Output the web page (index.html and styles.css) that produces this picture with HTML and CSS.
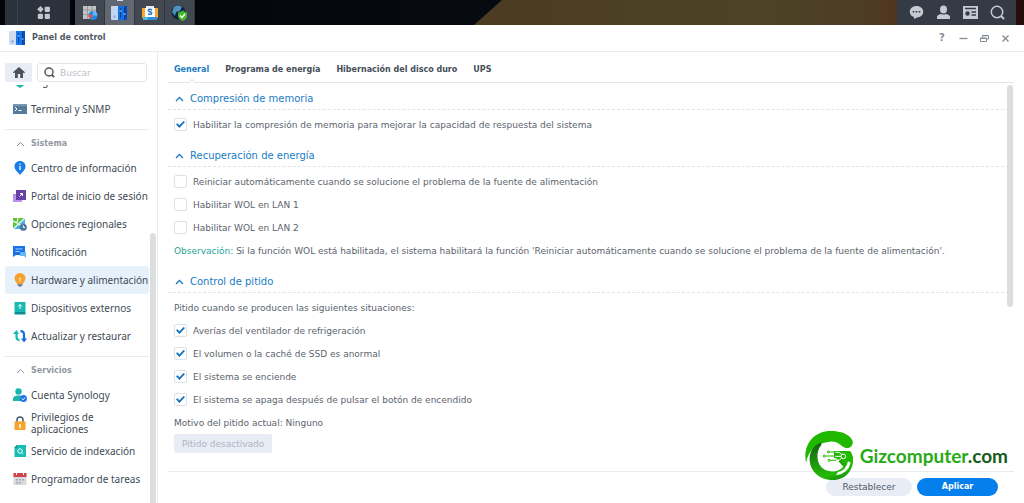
FILE: index.html
```html
<!DOCTYPE html>
<html lang="es">
  <head>
    <meta charset="utf-8">
    <title>Panel de control</title>
    <link rel="stylesheet" href="styles.css">
  </head>
  <body>
    <header class="taskbar">
      <svg class="wallpaper" viewBox="0 0 1024 25" preserveAspectRatio="none" aria-hidden="true">
        <defs>
          <linearGradient id="sand"><stop offset="0" stop-color="#4b3c22"/><stop offset=".5" stop-color="#4d4226"/><stop offset=".7" stop-color="#4c3e25"/><stop offset=".8" stop-color="#54301b"/><stop offset="1" stop-color="#250b08"/></linearGradient>
          <linearGradient id="night"><stop offset="0" stop-color="#02040a"/><stop offset="1" stop-color="#0c1017"/></linearGradient>
        </defs>
        <rect width="1024" height="25" fill="url(#night)"/>
        <path d="M502 0H1024V25H474z" fill="url(#sand)"/>
      </svg>
      <button class="task edge" aria-label="Mostrar escritorio"></button>
      <button class="task menu" aria-label="Menú principal">
        <svg width="14" height="14" viewBox="0 0 14 14" fill="#c3c8cf"><path d="M3.500 0L6.700 3.300 3.500 6.600.2 3.300z"/><rect x="7.700" y=".8" width="5.200" height="5.200" rx="1"/><rect x=".8" y="7.700" width="5.200" height="5.200" rx="1"/><rect x="7.700" y="7.700" width="5.200" height="5.200" rx="1"/></svg>
      </button>
      <button class="task app" aria-label="Monitor de recursos">
        <svg width="16" height="16" viewBox="0 0 16 16"><path d="M1 1h13v13H1z" fill="#c4c5c7"/><path d="M1 5h13M1 9.500h13M5.500 1v13M10 1v13" stroke="#8d9095" stroke-width=".8"/><circle cx="11" cy="10.500" r="4.500" fill="#2588ef"/><path d="M11 10.500V6a4.500 4.500 0 0 1 4.500 4.500z" fill="#65b5ff"/><path d="M11 10.500L6.800 9a4.500 4.500 0 0 0 1.500 5z" fill="#ef5149"/></svg>
      </button>
      <button class="task app active" aria-label="Panel de control">
        <svg width="17" height="16" viewBox="0 0 17 16"><path d="M1 1h6v14H1q-1 0-1-1V2q0-1 1-1z" fill="#c4d5ee"/><path d="M7 1h9v14H7z" fill="#1670dc"/><path d="M13 1h3v14h-3z" fill="#0a49bd"/><path d="M9.500 3v10M13.500 3v10" stroke="#082e72" stroke-width=".8"/><path d="M8.500 6h2M12.500 9h2" stroke="#65bdff" stroke-width="1.500"/><circle cx="3.500" cy="11.500" r="1.300" fill="#8bafe5"/></svg>
      </button>
      <button class="task app" aria-label="Centro de paquetes">
        <svg width="16" height="16" viewBox="0 0 16 16"><path d="M4 4V1h8v3" fill="#e9eef3"/><path d="M0 3h4v3h8V3h4v10H0z" fill="#f3a82b"/><path d="M3 3h10v9H3z" fill="#f7f9fc"/><path d="M1 12h14v3H1z" fill="#2790df"/><path d="M10 5Q8 3.800 6.800 4.500 5.500 6 8 6.700 10.500 7.500 9.300 9 8 9.800 6 8.800" fill="none" stroke="#2879d1" stroke-width="1.500"/><path d="M1 12h5v3H1z" fill="#4dbbd1"/></svg>
      </button>
      <button class="task app" aria-label="Asesor de seguridad">
        <svg width="17" height="16" viewBox="0 0 17 16"><circle cx="7.500" cy="7.500" r="7" fill="#0b263e"/><path d="M3 2q4-3 8 0L9 6 5 7 4 11 1 7z" fill="#4d91bc"/><path d="M8 8l5-3 1 4-4 3z" fill="#2d719b"/><path d="M11.500 6l4.500 1.500V11q0 3-4.500 5Q7 14 7 11V7.500z" fill="#43b82b"/><path d="M9 10.500l2 2 3-3.500" fill="none" stroke="#fff" stroke-width="1.500"/></svg>
      </button>
      <div class="tray">
        <button aria-label="Notificaciones"><svg width="15" height="15" viewBox="0 0 15 15"><path d="M7.500 1c4 0 6.700 2.500 6.700 5.800S11.500 12.300 8 12.400L5 14v-2C2.500 11.400.8 9.500.8 6.800.8 3.500 3.500 1 7.500 1z" fill="#c5cad3"/><path d="M3.700 6h1.600v1.600H3.700zM6.700 6h1.600v1.600H6.700zM9.700 6h1.600v1.600H9.700z" fill="#343b45"/></svg></button>
        <button aria-label="Usuario"><svg width="15" height="15" viewBox="0 0 15 15" fill="#c5cad3"><ellipse cx="7.500" cy="4.500" rx="3.500" ry="4"/><path d="M1 14v-2q0-2 4-3 2.500 1 5 0 4 1 4 3v2z"/></svg></button>
        <button aria-label="Widgets"><svg width="15" height="15" viewBox="0 0 15 15"><path d="M0 1h15v13H0z" fill="#c5cad3"/><path d="M2 3.500h11M8.500 7H13M8.500 10H13" stroke="#343b45" stroke-width="1.500"/><circle cx="4.500" cy="8.500" r="2.200" fill="#343b45"/></svg></button>
        <button aria-label="Buscar"><svg width="15" height="15" viewBox="0 0 15 15" fill="none" stroke="#c5cad3"><circle cx="7" cy="7" r="5.700" stroke-width="1.500"/><path d="M11 11l3 3" stroke-width="2"/></svg></button>
      </div>
    </header>

    <div class="window">
      <div class="titlebar">
        <svg width="17" height="16" viewBox="0 0 17 16"><path d="M1 1h6v14H1q-1 0-1-1V2q0-1 1-1z" fill="#cfdcf1"/><path d="M7 1h9v14H7z" fill="#1778e4"/><path d="M13 1h3v14h-3z" fill="#0a4fc4"/><path d="M9.500 3v10M13.500 3v10" stroke="#0a3586" stroke-width=".8"/><path d="M8.500 6h2M12.500 9h2" stroke="#53b1ff" stroke-width="1.500"/><circle cx="3.500" cy="11.500" r="1.300" fill="#86aae5"/></svg>
        <h1>Panel de control</h1>
        <div class="controls">
          <button class="help">?</button>
          <button aria-label="Minimizar"><svg width="9" height="9" viewBox="0 0 9 9"><path d="M.5 4.500h8" stroke="#858c96" stroke-width="1.300"/></svg></button>
          <button aria-label="Restaurar"><svg width="9" height="9" viewBox="0 0 9 9" fill="none" stroke="#858c96"><path d="M2.500 3.500V1.500h6v3.500H6.500M2.500 1.800h6"/><path d="M.5 4h6v3.500h-6zM.5 4.500h6"/></svg></button>
          <button aria-label="Cerrar"><svg width="9" height="9" viewBox="0 0 9 9"><path d="M1.500 1.500l6 6M7.500 1.500l-6 6" stroke="#858c96" stroke-width="1.400"/></svg></button>
        </div>
      </div>

      <div class="columns">
        <nav class="sidebar">
          <div class="tools">
            <button class="home" aria-label="Inicio"><svg width="12" height="11" viewBox="0 0 12 11"><path d="M6 0l6 5.300-.8 1-1.200-.9V11H7.200V7H4.800v4H2V5.400l-1.200.9-.8-1z" fill="#49525d"/></svg></button>
            <label class="search">
              <svg width="11" height="11" viewBox="0 0 11 11" fill="none" stroke="#49525d"><circle cx="5" cy="5" r="4" stroke-width="1.400"/><path d="M7.700 7.700l2.500 2.500" stroke-width="1.800"/></svg>
              <input type="text" placeholder="Buscar" aria-label="Buscar">
            </label>
          </div>
          <div class="list">
            <div class="items">
              <a href="#"><svg width="14" height="14" viewBox="0 0 14 14"><path d="M1 1l6-1 6 1v6q0 4-6 7Q1 11 1 7z" fill="#22b8ad"/></svg>Seguridad</a>
              <a href="#"><svg width="14" height="14" viewBox="0 0 14 14"><path d="M0 2h14v10H0z" fill="#587b9b"/><path d="M0 2h14v2H0z" fill="#7898b3"/><path d="M2 5l2 2-2 2M5.500 8.500h3" fill="none" stroke="#fff"/></svg>Terminal y SNMP</a>
              <h2><svg width="9" height="6" viewBox="0 0 9 6"><path d="M1 5l3.500-3.500L8 5" fill="none" stroke="#8d949d"/></svg>Sistema</h2>
              <a href="#"><svg width="14" height="14" viewBox="0 0 14 14"><path d="M7 0c3.200 0 5.500 2.300 5.500 5.500C12.500 9 9.500 10.500 7 14 4.500 10.500 1.500 9 1.500 5.500 1.500 2.300 3.800 0 7 0z" fill="#177ee9"/><path d="M7 2.500v1.300M7 5v4" stroke="#fff" stroke-width="1.300"/></svg>Centro de información</a>
              <a href="#"><svg width="14" height="14" viewBox="0 0 14 14"><path d="M0 5h9v8H0z" fill="#b990ee"/><path d="M3 1h10v10H3z" fill="#6741a5"/><path d="M6.500 7.500l3-3M7 4.500h2.500V7" stroke="#fff" fill="none"/></svg>Portal de inicio de sesión</a>
              <a href="#"><svg width="14" height="14" viewBox="0 0 14 14"><path d="M0 1h12v11H0z" fill="#5cc33a"/><path d="M12 1v11H0z" fill="#4aafe3"/><path d="M0 4l4 2 1-5M12 1L0 12M6 7l5 4" fill="none" stroke="#eefaf1" stroke-width="1.200"/><circle cx="10.300" cy="10.300" r="3.500" fill="#47769f"/><path d="M10.300 8.300v2.200H12" stroke="#fff" fill="none"/></svg>Opciones regionales</a>
              <a href="#"><svg width="14" height="14" viewBox="0 0 14 14"><path d="M0 1h12v9H3l-3 2z" fill="#1873e8"/><path d="M7 7h6v6l-2-2H7z" fill="#68b6fa"/><path d="M2.500 4h7M2.500 6.500h4" stroke="#9ed1ff"/></svg>Notificación</a>
              <a href="#" class="selected"><svg width="14" height="14" viewBox="0 0 14 14"><path d="M7 0a5.500 5.500 0 0 1 5.500 5.500c0 2.500-2 3.300-2.500 5.500H4C3.500 8.800 1.500 8 1.500 5.500A5.500 5.500 0 0 1 7 0z" fill="#f4a12f"/><path d="M4.500 11h5v1.500L7 14l-2.500-1.500z" fill="#7a858f"/><path d="M6 5h1v4" fill="none" stroke="#fff0bb"/></svg>Hardware y alimentación</a>
              <a href="#"><svg width="14" height="14" viewBox="0 0 14 14"><path d="M1.500 1h11v10h-11z" fill="#16bab2"/><path d="M1.500 11h11v2.500h-11z" fill="#078e8d"/><path d="M7 8V3.500M5 5.500l2-2 2 2" fill="none" stroke="#fff"/></svg>Dispositivos externos</a>
              <a href="#"><svg width="14" height="14" viewBox="0 0 14 14" fill="none" stroke-width="2.200"><path d="M3.500 3v5q0 3 3 3" stroke="#16b9b0"/><path d="M0 5l3.500-4L6 5z" fill="#16b9b0"/><path d="M7.500 2.200q4 0 3.500 4v5" stroke="#196be0"/><path d="M8 9.500l3 4 3-4z" fill="#196be0"/></svg>Actualizar y restaurar</a>
              <h2><svg width="9" height="6" viewBox="0 0 9 6"><path d="M1 5l3.500-3.500L8 5" fill="none" stroke="#8d949d"/></svg>Servicios</h2>
              <a href="#"><svg width="14" height="14" viewBox="0 0 14 14"><circle cx="5.500" cy="3.500" r="3.200" fill="#18b7ab"/><path d="M0 13v-3q1-2.500 4-2.500h3q3 0 4 2.500v3z" fill="#18b7ab"/><circle cx="10.500" cy="10.500" r="3.500" fill="#2374e8"/><path d="M8.800 10.500l1.300 1.300 2-2.300" fill="none" stroke="#fff"/></svg>Cuenta Synology</a>
              <a href="#"><svg width="14" height="14" viewBox="0 0 14 14"><path d="M4 7V4q0-3 3-3t3 3v3" fill="none" stroke="#4b596a" stroke-width="1.500"/><path d="M1.500 5.500h11V14h-11z" fill="#f7a52a"/><path d="M7 8v4" stroke="#fff" stroke-width="1.500"/></svg>Privilegios de aplicaciones</a>
              <a href="#"><svg width="14" height="14" viewBox="0 0 14 14"><path d="M4 1h9v12H1.500V3.500z" fill="#18bcb2"/><path d="M1.500 3.500L4 1v2.500z" fill="#087f84"/><circle cx="7" cy="7" r="2.200" fill="none" stroke="#fff"/><path d="M8.500 8.500l1.700 1.300" stroke="#fff"/></svg>Servicio de indexación</a>
              <a href="#"><svg width="14" height="14" viewBox="0 0 14 14"><path d="M.5 2h13v11H.5z" fill="#d7d9dd"/><path d="M.5 1h13v4H.5z" fill="#cf4545"/><path d="M3.500 0v3M10.500 0v3" stroke="#fff"/><path d="M3 7h2v1.500H3zM6 7h2v1.500H6zM9 7h2v1.500H9zM3 10h2v1.500H3zM6 10h2v1.500H6z" fill="#a5a9b0"/></svg>Programador de tareas</a>
            </div>
            <span class="thumb"></span>
          </div>
        </nav>

        <main>
          <div class="tabs">
            <a href="#" class="current">General</a>
            <a href="#">Programa de energía</a>
            <a href="#">Hibernación del disco duro</a>
            <a href="#">UPS</a>
          </div>
          <form class="settings">
            <section>
              <h3><svg width="9" height="6" viewBox="0 0 9 6"><path d="M1 5l3.500-3.500L8 5" fill="none" stroke="#1a7cc4" stroke-width="1.300"/></svg>Compresión de memoria</h3>
              <label class="row"><input type="checkbox" checked>Habilitar la compresión de memoria para mejorar la capacidad de respuesta del sistema</label>
            </section>
            <section>
              <h3><svg width="9" height="6" viewBox="0 0 9 6"><path d="M1 5l3.500-3.500L8 5" fill="none" stroke="#1a7cc4" stroke-width="1.300"/></svg>Recuperación de energía</h3>
              <label class="row"><input type="checkbox">Reiniciar automáticamente cuando se solucione el problema de la fuente de alimentación</label>
              <label class="row"><input type="checkbox">Habilitar WOL en LAN 1</label>
              <label class="row"><input type="checkbox">Habilitar WOL en LAN 2</label>
              <p class="row"><span><b>Observación:</b> Si la función WOL está habilitada, el sistema habilitará la función 'Reiniciar automáticamente cuando se solucione el problema de la fuente de alimentación'.</span></p>
            </section>
            <section>
              <h3><svg width="9" height="6" viewBox="0 0 9 6"><path d="M1 5l3.500-3.500L8 5" fill="none" stroke="#1a7cc4" stroke-width="1.300"/></svg>Control de pitido</h3>
              <p class="row">Pitido cuando se producen las siguientes situaciones:</p>
              <label class="row"><input type="checkbox" checked>Averías del ventilador de refrigeración</label>
              <label class="row"><input type="checkbox" checked>El volumen o la caché de SSD es anormal</label>
              <label class="row"><input type="checkbox" checked>El sistema se enciende</label>
              <label class="row"><input type="checkbox" checked>El sistema se apaga después de pulsar el botón de encendido</label>
              <p class="row">Motivo del pitido actual: Ninguno</p>
              <button class="beep" type="button" disabled>Pitido desactivado</button>
            </section>
            <span class="thumb"></span>
          </form>
          <footer>
            <button type="button">Restablecer</button>
            <button type="button" class="apply">Aplicar</button>
          </footer>
        </main>
      </div>
    </div>

    <div class="watermark">
      <svg width="50" height="52" viewBox="0 0 150 156">
        <defs>
          <linearGradient id="leaf" x1=".3" y1="0" x2=".7" y2="1"><stop offset="0" stop-color="#12670f"/><stop offset=".4" stop-color="#1d950d"/><stop offset=".8" stop-color="#25bb08"/><stop offset="1" stop-color="#168b0c"/></linearGradient>
        </defs>
        <path d="M6 98C-4 45 28 3 80 3c28 0 46 6 60 20 14 15 3 34-15 31-14-3-20-21-47-19C40 38 14 58 6 98z" fill="#20b900"/>
        <path d="M52 45C34 66 37 104 60 118c20 11 46 7 58-8l-16-18 12-29h24c10 12 12 32 5 50-10 26-36 39-64 37-37-2-60-30-62-57-2-27 12-48 35-56z" fill="url(#leaf)"/>
        <path d="M90 63h46c13 12 13 30 5 44-13-2-22-8-29-17l-22-7z" fill="#20b900"/>
        <path d="M96 136q36-5 44-38l-8-4q-6 28-30 32z" fill="#fff"/>
        <g fill="none" stroke="#20b900" stroke-width="3"><path d="M76 66h20M64 78h36M78 91h18l8-6"/><circle cx="73" cy="66" r="3"/><circle cx="61" cy="78" r="3"/><circle cx="75" cy="91" r="3"/></g>
        <g fill="none" stroke="#fff" stroke-width="3"><path d="M94 67h11l8 6M94 79h17M96 91h9l8-7"/><circle cx="118" cy="79" r="7"/></g>
      </svg>
      <span>Gizcomputer<em>.com</em></span>
    </div>
  </body>
</html>
```
FILE: styles.css
```css
* {
    box-sizing: border-box;
}

body {
    margin: 0;
    height: 100vh;
    display: flex;
    flex-direction: column;
    overflow: hidden;
    background: #fff;
    color: #5b636d;
    font-family: "DejaVu Sans", Verdana, sans-serif;
    font-size: 9px;
    line-height: 12px;
}

a {
    color: inherit;
    text-decoration: none;
}

button, input {
    margin: 0;
    padding: 0;
    border: 0;
    background: none;
    color: inherit;
    font: inherit;
}

h1, h2, h3, p {
    margin: 0;
}

svg {
    display: block;
    flex: none;
}

/* taskbar */

.taskbar {
    position: relative;
    flex: none;
    display: flex;
    height: 25px;
    padding: 0 8px 0 5px;
}

.wallpaper {
    position: absolute;
    left: 0;
    top: 0;
    width: 100%;
    height: 100%;
}

.task {
    position: relative;
    display: flex;
    align-items: center;
    justify-content: center;
    background: #2b323c;
}

.edge {
    width: 13px;
    border-right: 1px solid #39414b;
}

.menu {
    width: 52px;
    margin-right: 5px;
}

.app {
    width: 30px;
    background: #414851;
    border-right: 1px solid #30363e;
}

.app.active {
    background: #616872;
}

.app.active::before {
    content: "";
    position: absolute;
    top: 0;
    left: 12px;
    width: 6px;
    height: 1px;
    background: #dce1e7;
}

.tray {
    position: relative;
    display: flex;
    align-items: center;
    justify-content: center;
    gap: 12px;
    width: 119px;
    margin-left: auto;
    background: #343b45;
}

/* window */

.window {
    flex: 1;
    min-height: 0;
    display: flex;
    flex-direction: column;
}

.titlebar {
    flex: none;
    display: flex;
    align-items: center;
    height: 27px;
    padding: 0 14px 0 9px;
    border-bottom: 1px solid #e8ebee;
}

h1 {
    margin-left: 6px;
    font-size: 8px;
    color: #505862;
}

.controls {
    display: flex;
    align-items: center;
    gap: 12px;
    margin-left: auto;
    color: #858c96;
}

.help {
    width: 10px;
    font-size: 10px;
    font-weight: bold;
}

.columns {
    flex: 1;
    min-height: 0;
    display: flex;
}

.sidebar {
    flex: none;
    display: flex;
    flex-direction: column;
    width: 158px;
    border-right: 1px solid #e8ebee;
}

.tools {
    display: flex;
    gap: 5px;
    padding: 11px 10px 3px 5px;
}

.home {
    flex: none;
    display: flex;
    align-items: center;
    justify-content: center;
    width: 27px;
    height: 19px;
    border-radius: 2px;
    background: #e8ecf4;
}

.search {
    flex: 1;
    min-width: 0;
    display: flex;
    align-items: center;
    gap: 5px;
    height: 19px;
    padding: 0 6px;
    border: 1px solid #e2e6ea;
    border-radius: 3px;
}

.search input {
    flex: 1;
    min-width: 0;
    outline: 0;
}

.search input::placeholder {
    color: #bcc1c7;
}

.list {
    position: relative;
    flex: 1;
    min-height: 0;
    overflow: hidden;
}

/* the list is scrolled part of the way down */
.items {
    margin-top: -18px;
    padding: 0 8px 0 5px;
    font-family: "Noto Sans", sans-serif;
    font-size: 10px;
    color: #414b55;
}

.items a {
    display: flex;
    align-items: center;
    gap: 4px;
    height: 28px;
    padding-left: 8px;
    border-radius: 3px;
}

.items a.selected {
    background: #e6f1fc;
}

h2 {
    display: flex;
    align-items: center;
    gap: 6px;
    height: 25px;
    margin-top: 6px;
    padding: 3px 0 0 11px;
    border-top: 1px solid #e8ebee;
    font-family: "DejaVu Sans", Verdana, sans-serif;
    font-size: 8px;
    font-weight: bold;
    color: #9299a2;
}

.thumb {
    position: absolute;
    width: 6px;
    border-radius: 3px;
    background: #dcddde;
}

.list .thumb {
    top: 148px;
    right: 1px;
    bottom: -4px;
}

/* content */

main {
    flex: 1;
    min-width: 0;
    display: flex;
    flex-direction: column;
    padding: 0 10px;
}

.tabs {
    flex: none;
    display: flex;
    align-items: center;
    gap: 16px;
    height: 31px;
    padding: 6px 6px 0;
    border-bottom: 1px solid #e3e6e9;
    font-size: 8px;
    font-weight: bold;
    color: #454e58;
}

.current {
    position: relative;
    color: #1a7cc4;
}

.current::after {
    content: "";
    position: absolute;
    left: 50%;
    bottom: -10px;
    width: 5px;
    height: 5px;
    margin-left: -3px;
    border: solid #e3e6e9;
    border-width: 1px 0 0 1px;
    background: #fff;
    transform: rotate(45deg);
}

.settings {
    position: relative;
    flex: 1;
    min-height: 0;
    padding-top: 6px;
    overflow: hidden;
}

section {
    margin-bottom: 10px;
}

h3 {
    display: flex;
    align-items: center;
    gap: 6px;
    height: 21px;
    margin-bottom: 3px;
    padding-left: 7px;
    border-bottom: 1px dashed #e0e4e7;
    font-size: 10px;
    font-weight: normal;
    color: #1a7cc4;
}

.row {
    display: flex;
    align-items: center;
    gap: 6px;
    height: 23px;
    padding-left: 6px;
}

.row b {
    font-weight: normal;
    color: #1fa497;
}

.row input {
    appearance: none;
    flex: none;
    width: 13px;
    height: 13px;
    border: 1px solid #dce2e8;
    border-radius: 2px;
    display: grid;
    place-items: center;
}

.row input:checked::before {
    content: "";
    width: 9px;
    height: 8px;
    background: #0d70c2;
    clip-path: polygon(0 48%, 15% 34%, 38% 60%, 85% 6%, 100% 20%, 38% 94%);
}

.beep {
    display: block;
    height: 19px;
    margin: 0 6px;
    padding: 0 8px;
    border-radius: 2px;
    background: #e8ecf4;
    color: #adb6c5;
}

.settings .thumb {
    top: 2px;
    right: 1px;
    height: 222px;
}

footer {
    flex: none;
    display: flex;
    justify-content: flex-end;
    gap: 5px;
    padding: 6px 16px 7px;
    border-top: 1px solid #e8ebee;
}

footer button {
    width: 86px;
    height: 18px;
    border-radius: 9px;
    background: #e8ecf4;
    color: #505b69;
}

footer .apply {
    width: 81px;
    background: #057feb;
    color: #fff;
    font-size: 8px;
    font-weight: bold;
}

.watermark {
    position: absolute;
    right: 16px;
    bottom: 21px;
    display: flex;
    align-items: center;
    gap: 6px;
    font-family: Lato, sans-serif;
    font-size: 19px;
    font-weight: bold;
    line-height: 24px;
    color: #28aa16;
}

.watermark em {
    font-style: normal;
    color: #145c1b;
}
```
